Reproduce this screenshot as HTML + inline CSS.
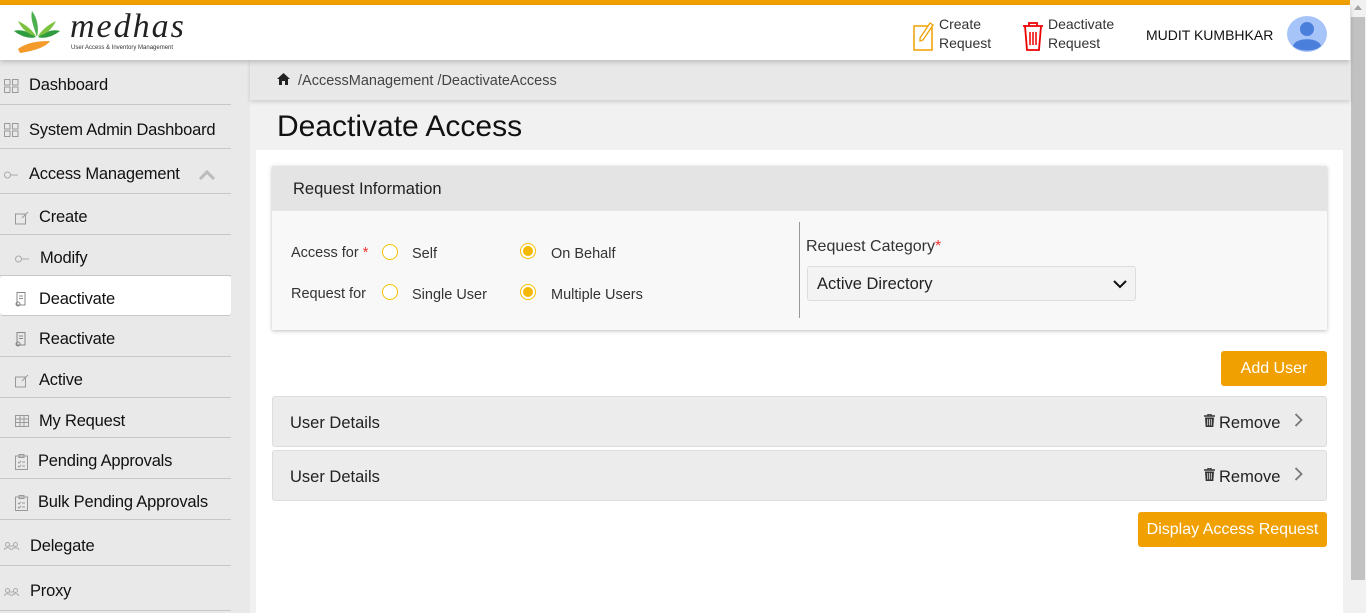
<!DOCTYPE html>
<html><head><meta charset="utf-8"><style>
*{box-sizing:border-box;margin:0;padding:0}
body{width:1366px;height:613px;overflow:hidden;background:#f1f1f1;font-family:"Liberation Sans",sans-serif;color:#222;position:relative}
.abs{position:absolute}
.top{left:0;top:0;width:1366px;height:5px;background:#f0a000}
.hdr{left:0;top:5px;width:1350px;height:55px;background:#fff;box-shadow:0 2px 5px rgba(0,0,0,.2);z-index:3}
.side{left:0;top:60px;width:250px;height:553px;background:#e9e9ea}
.item{position:absolute;left:0;width:231px;border-bottom:1px solid #c8c8c8;font-size:16.5px;color:#111;display:flex;align-items:center;padding-top:7px;letter-spacing:-.2px}
.item svg{margin-right:10px;flex:none}
.crumb{left:250px;top:60px;width:1100px;height:40px;background:#e8e8e9;box-shadow:0 2px 4px rgba(0,0,0,.15);font-size:14.5px;color:#444;padding:13px 0 0 48px;z-index:2}
.scroll{left:1350px;top:0;width:16px;height:613px;background:#f1f1f1}
.card{left:256px;top:150px;width:1087px;height:463px;background:#fff}
.btn{position:absolute;background:#f0a000;color:#fff;font-size:16px;border-radius:3px;text-align:center}
.radio{position:absolute;width:16px;height:16px;border:1.3px solid #f5c000;border-radius:50%;background:#fff}
.radio.on::after{content:"";position:absolute;left:1.5px;top:1.5px;width:10.5px;height:10.5px;border-radius:50%;background:#f5b800}
.lbl{position:absolute;font-size:14.5px;color:#333}
.ud{position:absolute;left:272px;width:1055px;height:51px;background:#ececec;border:1px solid #ddd;border-radius:3px;font-size:16.5px;color:#222}
</style></head><body>
<div class="abs top"></div>
<div class="abs hdr">
 <svg class="abs" style="left:12px;top:4px" width="50" height="46" viewBox="0 0 50 46">
  <path d="M25 28 C22 18 18 10 20 2 C26 10 27 20 25 28Z" fill="#4caf50"/>
  <path d="M24 28 C16 22 8 20 2 22 C10 28 18 30 24 28Z" fill="#2e9c3f"/>
  <path d="M26 28 C34 22 42 20 48 22 C40 28 32 30 26 28Z" fill="#2e9c3f"/>
  <path d="M24 27 C18 18 10 14 6 12 C10 20 16 26 24 27Z" fill="#7cc242"/>
  <path d="M26 27 C32 18 40 14 44 12 C40 20 34 26 26 27Z" fill="#7cc242"/>
  <path d="M6 40 C14 34 24 32 38 32 C34 38 22 42 8 44Z" fill="#f39a2b"/>
 </svg>
 <div class="abs" style="left:70px;top:3px;font-family:'Liberation Serif',serif;font-size:34px;letter-spacing:2px;color:#222;font-style:italic">medhas</div>
 <div class="abs" style="left:71px;top:40px;font-size:6px;color:#333">User Access &amp; Inventory Management</div>
 <svg class="abs" style="left:913px;top:15px" width="22" height="32" viewBox="0 0 22 32"><rect x="1" y="6" width="18" height="24" fill="none" stroke="#f0a000" stroke-width="1.5"/><path d="M7 18 L17 3 L20 5 L10 20 L7 21Z" fill="#fff" stroke="#f0a000" stroke-width="1.3"/></svg>
 <div class="abs" style="left:939px;top:10px;font-size:14px;color:#333;line-height:19px">Create<br>Request</div>
 <svg class="abs" style="left:1022px;top:15px" width="22" height="32" viewBox="0 0 22 32"><path d="M1 6H21M7 6V3H15V6M3 6L5 30H17L19 6" fill="none" stroke="#e00" stroke-width="1.8"/><path d="M8 12V25M11 12V25M14 12V25" stroke="#e00" stroke-width="1.5"/></svg>
 <div class="abs" style="left:1048px;top:10px;font-size:14px;color:#333;line-height:19px">Deactivate<br>Request</div>
 <div class="abs" style="left:1146px;top:22px;font-size:14px;color:#111">MUDIT KUMBHKAR</div>
 <svg class="abs" style="left:1287px;top:11px" width="40" height="36" viewBox="0 0 40 36"><ellipse cx="20" cy="18" rx="20" ry="18" fill="#a6c4f7"/><circle cx="20" cy="13" r="7" fill="#4a7fdc"/><path d="M6 30 C8 21 32 21 34 30 C28 36 12 36 6 30Z" fill="#4a7fdc"/></svg>
</div>
<div class="abs side">
 <div class="item" style="top:0;height:45px;padding-left:4px"><svg width="15" height="14" viewBox="0 0 15 14" fill="none" stroke="#999"><rect x=".5" y=".5" width="5.5" height="5.5"/><rect x="8.5" y=".5" width="5.5" height="5.5"/><rect x=".5" y="8" width="5.5" height="5.5"/><rect x="8.5" y="8" width="5.5" height="5.5"/></svg>Dashboard</div>
 <div class="item" style="top:45px;height:44px;padding-left:4px"><svg width="15" height="14" viewBox="0 0 15 14" fill="none" stroke="#999"><rect x=".5" y=".5" width="5.5" height="5.5"/><rect x="8.5" y=".5" width="5.5" height="5.5"/><rect x=".5" y="8" width="5.5" height="5.5"/><rect x="8.5" y="8" width="5.5" height="5.5"/></svg>System Admin Dashboard</div>
 <div class="item" style="top:89px;height:45px;padding-left:4px"><svg width="15" height="8" viewBox="0 0 15 8" fill="none" stroke="#aaa"><circle cx="3.5" cy="4" r="3"/><path d="M7 4H14"/></svg>Access Management<svg style="margin-left:18px" width="18" height="10" viewBox="0 0 18 10"><path d="M2 9L9 2L16 9" fill="none" stroke="#bbb" stroke-width="3"/></svg></div>
 <div class="item" style="top:134px;height:41px;padding-left:15px"><svg width="14" height="14" viewBox="0 0 14 14" fill="none" stroke="#999"><rect x=".5" y="3" width="10" height="10"/><path d="M7 7L13 1"/></svg>Create</div>
 <div class="item" style="top:175px;height:41px;padding-left:15px"><svg width="15" height="8" viewBox="0 0 15 8" fill="none" stroke="#aaa"><circle cx="3.5" cy="4" r="3"/><path d="M7 4H14"/></svg>Modify</div>
 <div class="item" style="top:216px;height:40px;padding-left:15px;background:#fff;border-radius:3px"><svg width="14" height="15" viewBox="0 0 14 15" fill="none" stroke="#888"><path d="M2 .5H10V13H2Z M4 4H8M4 6.5H8"/><circle cx="3" cy="12" r="2"/></svg>Deactivate</div>
 <div class="item" style="top:256px;height:41px;padding-left:15px"><svg width="14" height="15" viewBox="0 0 14 15" fill="none" stroke="#888"><path d="M2 .5H10V13H2Z M4 4H8M4 6.5H8"/><circle cx="3" cy="12" r="2"/></svg>Reactivate</div>
 <div class="item" style="top:297px;height:41px;padding-left:15px"><svg width="14" height="14" viewBox="0 0 14 14" fill="none" stroke="#999"><rect x=".5" y="3" width="10" height="10"/><path d="M7 7L13 1"/></svg>Active</div>
 <div class="item" style="top:338px;height:40px;padding-left:15px"><svg width="14" height="12" viewBox="0 0 14 12" fill="none" stroke="#999"><rect x=".5" y=".5" width="13" height="11"/><path d="M.5 4H13.5M.5 7.5H13.5M5 .5V11.5M9 .5V11.5"/></svg>My Request</div>
 <div class="item" style="top:378px;height:41px;padding-left:15px"><svg width="13" height="16" viewBox="0 0 13 16" fill="none" stroke="#999"><rect x=".5" y="2" width="12" height="13.5"/><rect x="4" y=".5" width="5" height="3"/><path d="M3 8L4 9L6 7M3 12L4 13L6 11M7 8H10M7 12H10"/></svg>Pending Approvals</div>
 <div class="item" style="top:419px;height:41px;padding-left:15px"><svg width="13" height="16" viewBox="0 0 13 16" fill="none" stroke="#999"><rect x=".5" y="2" width="12" height="13.5"/><rect x="4" y=".5" width="5" height="3"/><path d="M3 8L4 9L6 7M3 12L4 13L6 11M7 8H10M7 12H10"/></svg>Bulk Pending Approvals</div>
 <div class="item" style="top:460px;height:46px;padding-left:4px"><svg width="16" height="8" viewBox="0 0 16 8" fill="none" stroke="#aaa"><circle cx="3.5" cy="2.5" r="2"/><circle cx="11.5" cy="2.5" r="2"/><path d="M0 8C1 5 6 5 7 8M8 8C9 5 14 5 15 8M5 4H10"/></svg>Delegate</div>
 <div class="item" style="top:506px;height:45px;padding-left:4px"><svg width="16" height="8" viewBox="0 0 16 8" fill="none" stroke="#aaa"><circle cx="3.5" cy="2.5" r="2"/><circle cx="11.5" cy="2.5" r="2"/><path d="M0 8C1 5 6 5 7 8M8 8C9 5 14 5 15 8M5 4H10"/></svg>Proxy</div>
</div>
<div class="abs crumb"><svg class="abs" style="left:27px;top:13px" width="13" height="12" viewBox="0 0 13 12"><path d="M6.5 0L0 6H2V12H5V8H8V12H11V6H13Z" fill="#222"/></svg>/AccessManagement /DeactivateAccess</div>
<div class="abs" style="left:277px;top:110px;font-size:30px;color:#111">Deactivate Access</div>
<div class="abs card"></div>
<div class="abs" style="left:272px;top:166px;width:1055px;height:164px;background:#f8f8f8;box-shadow:0 1px 4px rgba(0,0,0,.25)">
 <div style="height:45px;background:#e4e4e4;font-size:16.5px;padding:14px 0 0 21px;color:#222">Request Information</div>
 <div class="lbl" style="left:19px;top:79px">Access for <span style="color:#e33">*</span></div>
 <div class="radio" style="left:110px;top:78px"></div><div class="lbl" style="left:140px;top:80px">Self</div>
 <div class="radio on" style="left:248px;top:77px"></div><div class="lbl" style="left:279px;top:80px">On Behalf</div>
 <div class="lbl" style="left:19px;top:120px">Request for</div>
 <div class="radio" style="left:110px;top:118px"></div><div class="lbl" style="left:140px;top:121px">Single User</div>
 <div class="radio on" style="left:248px;top:118px"></div><div class="lbl" style="left:279px;top:121px">Multiple Users</div>
 <div class="abs" style="left:527px;top:56px;width:1px;height:96px;background:#999"></div>
 <div class="abs" style="left:534px;top:72px;font-size:16px;color:#333">Request Category<span style="color:#e33">*</span></div>
 <div class="abs" style="left:535px;top:100px;width:329px;height:35px;border:1px solid #ddd;border-radius:3px;background:#f3f3f3;font-size:16.5px;padding:8px 0 0 9px;color:#222">Active Directory
  <svg class="abs" style="right:8px;top:13px" width="14" height="9" viewBox="0 0 14 9"><path d="M1 1L7 7L13 1" fill="none" stroke="#111" stroke-width="2"/></svg></div>
</div>
<div class="btn" style="left:1221px;top:351px;width:106px;height:35px;padding-top:9px">Add User</div>
<div class="ud" style="top:396px"><span class="abs" style="left:17px;top:17px">User Details</span><svg class="abs" style="left:931px;top:17px" width="11" height="13" viewBox="0 0 11 13"><path d="M0 2H11M4 2V0H7V2" stroke="#333" stroke-width="1.4" fill="none"/><path d="M1 3.5H10L9.3 13H1.7Z" fill="#333"/><path d="M3.7 5V11.5M5.5 5V11.5M7.3 5V11.5" stroke="#ececec" stroke-width=".8"/></svg><span class="abs" style="left:946px;top:17px">Remove</span><svg class="abs" style="left:1021px;top:16px" width="9" height="14" viewBox="0 0 9 14"><path d="M1.5 1L7.5 7L1.5 13" fill="none" stroke="#777" stroke-width="1.8"/></svg></div>
<div class="ud" style="top:450px"><span class="abs" style="left:17px;top:17px">User Details</span><svg class="abs" style="left:931px;top:17px" width="11" height="13" viewBox="0 0 11 13"><path d="M0 2H11M4 2V0H7V2" stroke="#333" stroke-width="1.4" fill="none"/><path d="M1 3.5H10L9.3 13H1.7Z" fill="#333"/><path d="M3.7 5V11.5M5.5 5V11.5M7.3 5V11.5" stroke="#ececec" stroke-width=".8"/></svg><span class="abs" style="left:946px;top:17px">Remove</span><svg class="abs" style="left:1021px;top:16px" width="9" height="14" viewBox="0 0 9 14"><path d="M1.5 1L7.5 7L1.5 13" fill="none" stroke="#777" stroke-width="1.8"/></svg></div>
<div class="btn" style="left:1138px;top:512px;width:189px;height:35px;padding-top:9px">Display Access Request</div>
<div class="abs scroll"><div class="abs" style="left:1px;top:17px;width:14px;height:563px;background:#c1c1c1"></div><div class="abs" style="left:4px;top:5px;width:0;height:0;border:4px solid transparent;border-bottom:5px solid #a3a3a3;border-top:0"></div></div>
</body></html>
